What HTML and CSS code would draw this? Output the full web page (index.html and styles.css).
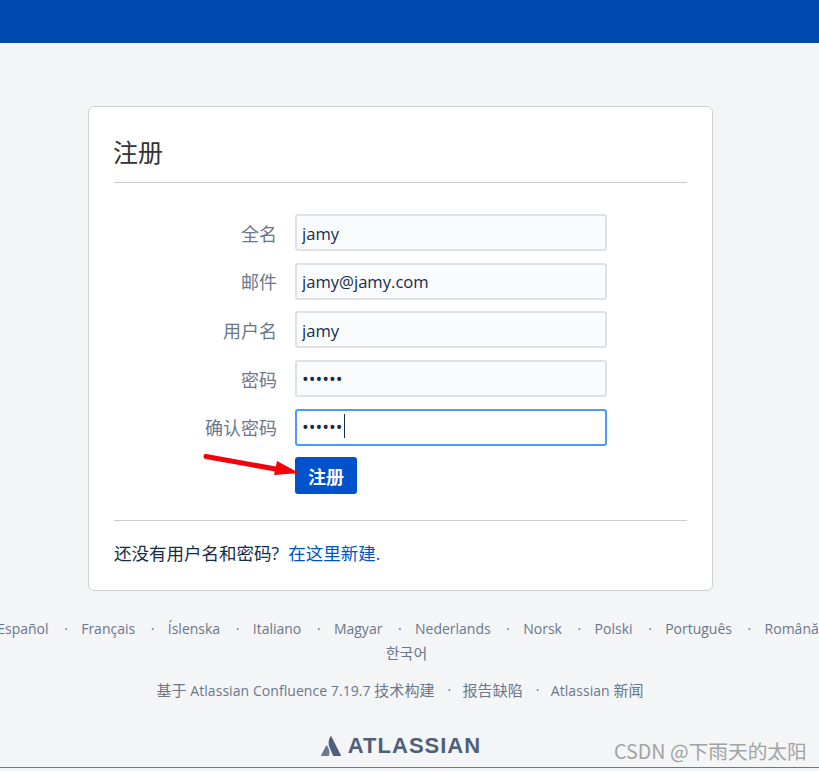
FILE: index.html
```html
<!DOCTYPE html>
<html lang="zh">
<head>
<meta charset="utf-8">
<title>注册</title>
<link rel="stylesheet" href="styles.css">
</head>
<body>
<header class="topbar"></header>
<main class="card">
  <h1 class="card-title">注册</h1>
  <form class="form">
    <div class="row"><label class="label">全名</label><input class="field" type="text" value="jamy" readonly></div>
    <div class="row"><label class="label">邮件</label><input class="field" type="text" value="jamy@jamy.com" readonly></div>
    <div class="row"><label class="label">用户名</label><input class="field" type="text" value="jamy" readonly></div>
    <div class="row"><label class="label">密码</label><input class="field field-secret" type="password" value="123456" readonly></div>
    <div class="row"><label class="label">确认密码</label>
      <div class="field-wrap"><input class="field field-secret field-focus" type="password" value="123456" readonly><span class="caret"></span></div>
    </div>
    <div class="row row-btn"><span class="label"></span><button class="btn" type="button">注册</button></div>
  </form>
  <p class="signup">还没有用户名和密码?&nbsp; <a class="link" href="#">在这里新建</a><span class="link">.</span></p>
</main>
<footer class="footer">
  <ul class="langs">
    <li>Español</li><li>Français</li><li>Íslenska</li><li>Italiano</li><li>Magyar</li><li>Nederlands</li><li>Norsk</li><li>Polski</li><li>Português</li><li>Română</li>
  </ul>
  <div class="lang-extra"><span class="cjk">한국어</span></div>
  <ul class="about">
    <li><span class="cjk">基于</span> Atlassian Confluence 7.19.7 <span class="cjk">技术构建</span></li><li><span class="cjk">报告缺陷</span></li><li>Atlassian <span class="cjk">新闻</span></li>
  </ul>
  <div class="brand">
    <svg class="brand-mark" viewBox="0 0 20 20" width="20" height="20" aria-hidden="true">
      <path d="M5.900 9.600c-.3-.3-.7-.3-.9.100L.1 19.200c-.2.400.1.800.5.800h6.700c.2 0 .4-.1.500-.3 1.400-3 .5-7.500-2-10.100z" fill="#6b7a92"/>
      <path d="M9.500.4C7 4.400 7.200 8.800 8.800 12.100l3.300 7.600c.1.200.3.300.5.300h6.800c.4 0 .7-.4.500-.8L10.400.4c-.2-.4-.7-.4-.9 0z" fill="#505f79"/>
    </svg>
    <span class="brand-name">ATLASSIAN</span>
  </div>
</footer>
<svg class="arrow" viewBox="0 0 100 24" width="100" height="24" aria-hidden="true">
  <path d="M3 2.500 L78 16" stroke="#f5000a" stroke-width="5" stroke-linecap="round" fill="none"/>
  <path d="M74 7 L96 19 L71 21 Z" fill="#f5000a"/>
</svg>
<div class="watermark">CSDN @下雨天的太阳</div>
<div class="bottom-line"></div>
</body>
</html>
```
FILE: styles.css
```css
* { box-sizing: border-box; }
html, body { margin: 0; height: 771px; overflow: hidden; }
body {
  position: relative;
  background: #f4f5f7;
  color: #172b4d;
  font-family: "Open Sans", "Noto Sans CJK SC", sans-serif;
  font-size: 14px;
}
.topbar { height: 43px; background: #0049b0; }
.card {
  width: 625px;
  height: 485px;
  margin: 63px 0 0 88px;
  padding: 25px;
  background: #fff;
  border: 1px solid #cfd1d6;
  border-radius: 6px;
}
.card-title {
  margin: 0;
  height: 51px;
  border-bottom: 1px solid #cccccc;
  font-size: 25px;
  line-height: 40px;
  font-weight: 400;
  color: #333;
  text-indent: -1px;
}
.form { padding-top: 31px; height: 338px; border-bottom: 1px solid #cccccc; }
.row { display: flex; align-items: center; gap: 18px; height: 37px; margin-bottom: 11.700px; }
.row-btn { margin-top: 1px; }
.label { width: 163px; text-align: right; color: #6b778c; font-size: 18px; }
.field, .field-wrap { width: 312px; height: 37px; }
.field-wrap { position: relative; }
.field {
  display: block;
  padding: 1px 5px 0;
  background: #fafbfc;
  border: 2px solid #dfe1e6;
  border-radius: 3px;
  color: #172b4d;
  font: 16.600px "Open Sans", sans-serif;
  outline: none;
}
.field-secret { padding-top: 0; font-size: 18px; }
.field-focus { background: #fff; border-color: #4c9aff; }
.caret { position: absolute; left: 49px; top: 5px; width: 1px; height: 24px; background: #172b4d; }
.btn {
  width: 62px;
  height: 37px;
  padding: 0;
  border: 0;
  border-radius: 3px;
  background: #0052cc;
  color: #fff;
  font: 700 18px "Noto Sans CJK SC", sans-serif;
}
.signup { margin: 20px 0 0; font-size: 17.500px; line-height: 24px; color: #172b4d; }
.link { color: #0052cc; text-decoration: none; }
.footer { color: #6b778c; font-size: 14px; text-align: center; }
.cjk { font-size: 15px; }
.langs, .about { list-style: none; margin: 0; padding: 0; display: flex; justify-content: center; }
.langs { margin: 26px -48.500px 0 -51.500px; height: 24px; line-height: 24px; gap: 32.600px; white-space: nowrap; }
.langs li, .about li { position: relative; }
.langs li + li::before, .about li + li::before {
  content: "·";
  position: absolute;
  left: -17px;
}
.lang-extra { height: 24px; line-height: 24px; padding-right: 6px; }
.about { margin-top: 13px; height: 24px; line-height: 24px; gap: 28px; padding-right: 19px; letter-spacing: 0.060px; }
.about li + li::before { left: -15px; }
.brand { display: flex; justify-content: center; align-items: center; gap: 7px; margin-top: 32px; padding-right: 17px; }
.brand-name { font: 700 22px "Liberation Sans", sans-serif; letter-spacing: 1px; color: #505f79; line-height: 24px; }
.arrow { position: absolute; left: 203px; top: 454px; }
.watermark {
  position: absolute;
  left: 614px;
  top: 739px;
  color: #a3a3a3;
  font: 19.700px "Noto Sans CJK SC", sans-serif;
  line-height: 24px;
  white-space: nowrap;
}
.bottom-line { position: absolute; left: 0; right: 0; top: 767px; height: 1px; background: #4f8a72; }
```
